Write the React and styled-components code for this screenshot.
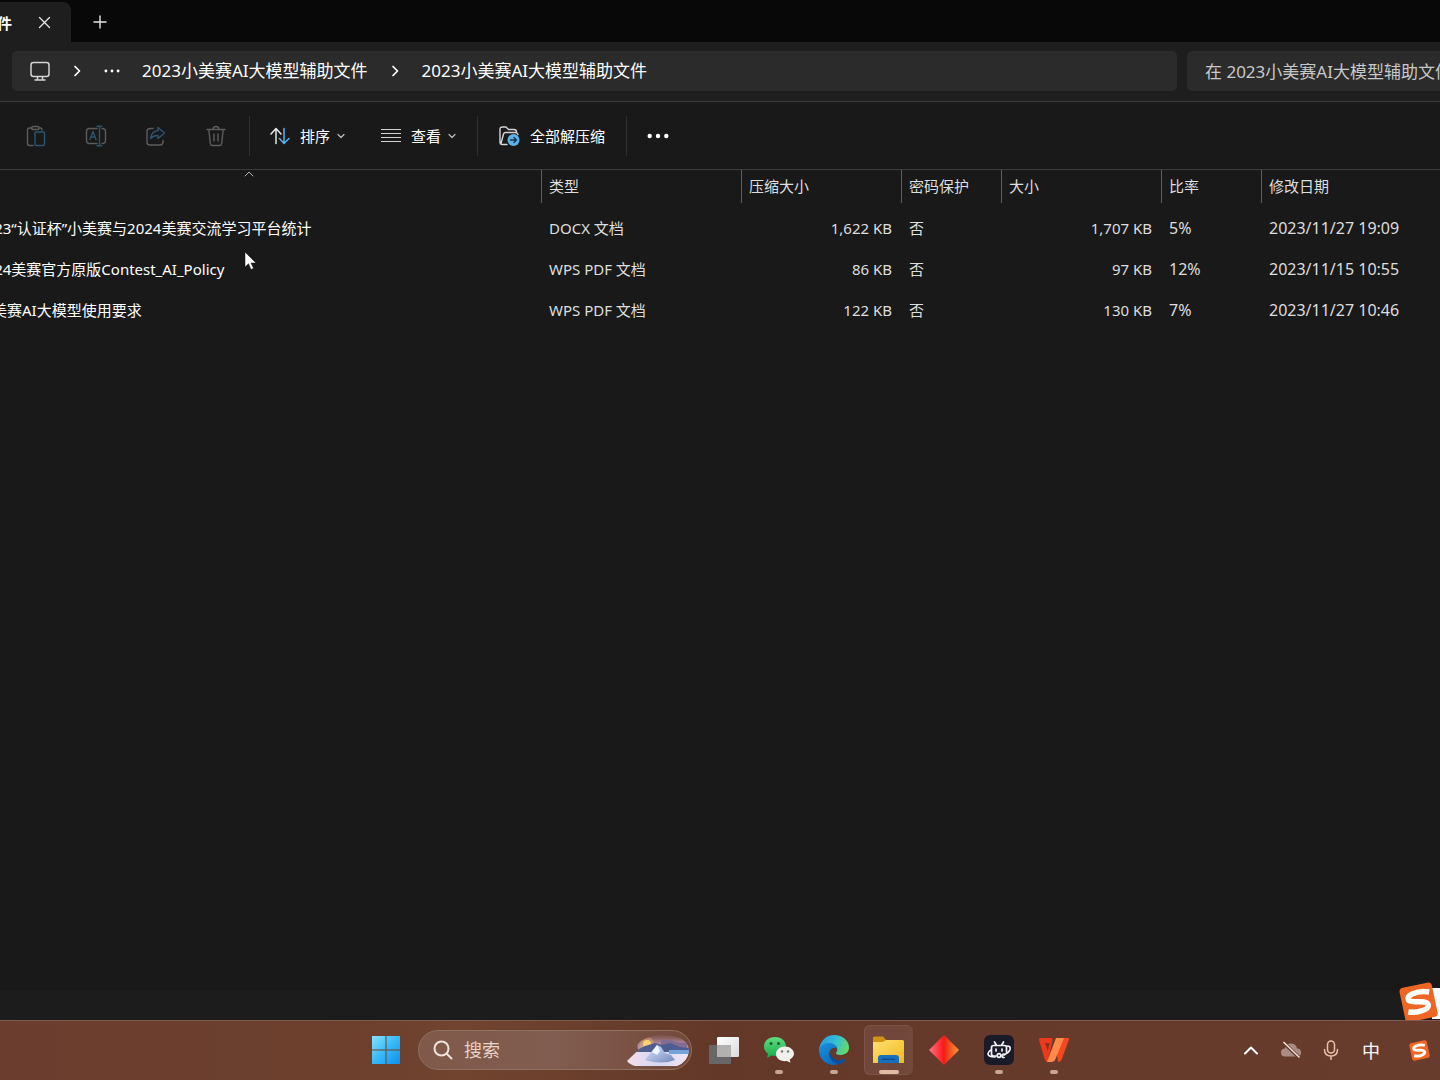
import React from 'react'
import styled, { createGlobalStyle } from 'styled-components'

const colors = {
  black: '#080808',
  chrome: '#1e1e1e',
  field: '#2b2b2b',
  panel: '#191919',
  status: '#1c1c1c',
  line: '#3b3b3b',
  text: '#ffffff',
  soft: '#dedede',
  dim: '#5c5c5c',
  dimBlue: '#2c566e',
  blue: '#5cb3ec',
}

const GlobalStyle = createGlobalStyle`
  * {
    box-sizing: border-box;
  }

  body {
    margin: 0;
    background: ${colors.panel};
    color: ${colors.text};
    font-family: "Noto Sans", "Noto Sans CJK SC", sans-serif;
    font-size: 15px;
  }

  button, input {
    font: inherit;
    color: inherit;
    background: none;
    border: 0;
    padding: 0;
  }

  svg {
    display: block;
    flex: none;
  }
`

const Desktop = styled.div`
  position: relative;
  min-height: 100vh;
  display: flex;
  flex-direction: column;
  overflow: hidden;
`

/* the window is dragged wider than the screen on both sides */
const Explorer = styled.main`
  flex: 1;
  display: flex;
  flex-direction: column;
  margin: 0 -60px 0 -43px;
`

const TabBar = styled.div`
  height: 42px;
  display: flex;
  align-items: flex-end;
  background: ${colors.black};
`

const Tab = styled.div`
  width: 114px;
  height: 40px;
  padding-right: 20px;
  display: flex;
  align-items: center;
  justify-content: flex-end;
  gap: 26px;
  overflow: hidden;
  white-space: nowrap;
  font-weight: 700;
  background: ${colors.chrome};
  border-radius: 8px 8px 0 0;
`

const NewTab = styled.button`
  height: 40px;
  width: 58px;
  display: flex;
  align-items: center;
  justify-content: center;
`

const AddressBar = styled.div`
  display: flex;
  gap: 10px;
  padding: 9px 0 10px 55px;
  background: ${colors.chrome};
  border-bottom: 1px solid ${colors.line};
`

const Crumbs = styled.nav`
  flex: 1;
  height: 40px;
  padding: 0 18px;
  display: flex;
  align-items: center;
  gap: 22px;
  white-space: nowrap;
  font-size: 17px;
  line-height: 20px;
  background: ${colors.field};
  border-radius: 5px;

  a {
    color: ${colors.text};
    text-decoration: none;
  }
`

const SearchInput = styled.input`
  width: 313px;
  height: 40px;
  padding-left: 18px;
  font-size: 17px;
  background: ${colors.field};
  border-radius: 5px;

  &::placeholder {
    color: #c8c8c8;
    opacity: 1;
  }
`

const Toolbar = styled.div`
  height: 68px;
  padding-left: 49px;
  display: flex;
  align-items: center;
  background: ${colors.panel};
  border-bottom: 1px solid ${colors.line};
`

const IconButton = styled.button`
  width: 60px;
  height: 40px;
  display: flex;
  align-items: center;
  justify-content: center;
`

const ToolButton = styled.button`
  height: 40px;
  padding: 0 18px;
  display: flex;
  align-items: center;
  gap: 10px;
`

const Label = styled.span`
  display: flex;
  align-items: center;
  gap: 7px;
`

const Divider = styled.div`
  width: 1px;
  height: 40px;
  margin: 0 2px 0 3px;
  background: #303030;
`

const Files = styled.div`
  flex: 1;
`

const Table = styled.table`
  width: 100%;
  table-layout: fixed;
  border-collapse: collapse;
  white-space: nowrap;
  color: ${colors.soft};
`

const HeadCell = styled.th`
  width: ${props => props.$width};
  height: 37px;
  padding: 0;
  vertical-align: top;
  text-align: left;
  font-weight: 400;

  div {
    height: 33px;
    padding-left: 7px;
    line-height: 33px;
    border-left: 1px solid #5e5e5e;
  }
`

const SortMark = styled.th`
  width: 584px;
  padding: 1px 0 0;
  vertical-align: top;

  svg {
    margin: 0 auto;
  }
`

const Cell = styled.td`
  height: 41px;
  padding: 0 9px 0 8px;
  text-align: ${props => (props.$right ? 'right' : 'left')};
  font-size: ${props => (props.$figures ? '16px' : '15px')};
`

const NameCell = styled(Cell)`
  padding-left: 20px;
  color: ${colors.text};
`

const StatusBar = styled.div`
  height: 29px;
  background: ${colors.status};
`

const Taskbar = styled.footer`
  height: 60px;
  padding: 0 1px 1px 0;
  display: grid;
  grid-template-columns: 1fr auto 1fr;
  align-items: center;
  border-top: 1px solid #805c4e;
  background: linear-gradient(90deg, #6a3d2e 0%, #6c402d 25%, #70442f 32%, #633828 50%, #673b2b 75%, #683c2c 100%);
`

const Apps = styled.div`
  grid-column: 2;
  display: flex;
  align-items: center;
`

const AppButton = styled.button`
  position: relative;
  width: 55px;
  height: 58px;
  display: flex;
  align-items: center;
  justify-content: center;
`

const ActiveFrame = styled.span`
  position: absolute;
  inset: 4px 3px;
  border: 1px solid #7d5546;
  border-right-width: 5px;
  border-right-color: #714a3b;
  border-radius: 6px;
  background: #70473a;
`

const Running = styled.span`
  position: absolute;
  bottom: 5px;
  width: ${props => (props.$active ? '20px' : '8px')};
  height: 4px;
  border-radius: 2px;
  background: ${props => (props.$active ? '#e2bba5' : '#c7a597')};
`

const SearchBox = styled.label`
  width: 274px;
  height: 40px;
  margin: 0 4px 0 5px;
  padding: 0 2px 0 14px;
  display: flex;
  align-items: center;
  gap: 11px;
  overflow: hidden;
  border: 1px solid #90705f;
  border-radius: 20px;
  background: linear-gradient(90deg, #80594a, #805d50 50%, #74493a);

  input {
    flex: 1;
    min-width: 0;
    font-size: 18px;
  }

  input::placeholder {
    color: #e6d2c8;
    opacity: 1;
  }
`

const Tray = styled.div`
  display: flex;
  justify-content: flex-end;
`

const TrayButton = styled.button`
  width: 40px;
  height: 40px;
  display: flex;
  align-items: center;
  justify-content: center;
  font-size: 18px;

  &:last-child {
    margin-left: 8px;
  }
`

const Pointer = styled.div`
  position: absolute;
  left: 244px;
  top: 251px;
`

const InputBadge = styled.div`
  position: absolute;
  right: 0;
  bottom: 60px;
  width: 42px;
  height: 38px;
  overflow: hidden;
`

const Line = ({ size = 20, width = size, height = size, box = '0 0 20 20', stroke = '#e6e6e6', weight = 1.4, children }) => (
  <svg width={width} height={height} viewBox={box} fill="none" stroke={stroke} strokeWidth={weight} strokeLinecap="round" strokeLinejoin="round">
    {children}
  </svg>
)

const CrumbArrow = () => (
  <Line width={10} height={14} box="0 0 10 14" stroke="#fff" weight={1.7}>
    <path d="M3 2.5 7.5 7 3 11.5" />
  </Line>
)

const DownArrow = () => (
  <Line width={8} height={6} box="0 0 8 6" stroke="#bdbdbd" weight={1.2}>
    <path d="M1 1.5 4 4.5 7 1.5" />
  </Line>
)

const Dots = ({ width, radius }) => (
  <svg width={width} height="6" viewBox={`0 0 ${width} 6`} fill="#fff">
    <circle cx={radius + 0.5} cy="3" r={radius} />
    <circle cx={width / 2} cy="3" r={radius} />
    <circle cx={width - radius - 0.5} cy="3" r={radius} />
  </svg>
)

const PasteIcon = () => (
  <Line size={22} box="0 0 22 22" stroke={colors.dim}>
    <path d="M7 3H4.5Q2.5 3 2.5 5v13.5q0 2 2 2H8M14 3h1.500q1.500 0 1.500 2" />
    <rect x="6.500" y="1.500" width="7.500" height="3" rx="1.500" />
    <rect x="10" y="7" width="9.500" height="13.500" rx="1.500" stroke={colors.dimBlue} />
  </Line>
)

const RenameIcon = () => (
  <Line size={22} box="0 0 22 22" stroke={colors.dim}>
    <path d="M12 3.500H4.500q-3 0-3 3v9q0 3 3 3H12M17 3.500q3.500 0 3.500 3v9q0 3-3.500 3" />
    <path d="m5 14.500 3-8 3 8M6 12h4M14.500 1.500v19M12 1.200h5M12 20.800h5" stroke={colors.dimBlue} />
  </Line>
)

const ShareIcon = () => (
  <Line size={22} box="0 0 22 22" stroke={colors.dim}>
    <path d="M8 3.500H5q-3 0-3 3v10.500q0 3 3 3h10q3 0 3-3v-1.500" />
    <path d="M13 2.500 19.500 8 13 13.500v-3q-4.500-.3-7.500 3 .8-7 7.500-8z" stroke={colors.dimBlue} />
  </Line>
)

const TrashIcon = () => (
  <Line size={22} box="0 0 22 22" stroke={colors.dim}>
    <path d="M2 4.500h18M8 4.300q0-2.800 3-2.800t3 2.800M3.800 4.500 5.300 18.500q.2 2 2 2h7.400q1.800 0 2-2L18.200 4.500M9 9v7M13 9v7" />
  </Line>
)

const SortIcon = () => (
  <Line weight={1.5}>
    <path d="M6 17.500V3M1 8l5-5.500L11 8" />
    <path d="M14 2.500V17M9.500 12.500 14 17.500l5-5" stroke={colors.blue} />
  </Line>
)

const ViewIcon = () => (
  <svg width="20" height="20" viewBox="0 0 20 20" fill="#d2d2d2">
    <path d="M0 3h20v1H0zM0 7h20v1H0zM0 11h20v1H0zM0 15h20v1H0z" />
  </svg>
)

const ExtractIcon = () => (
  <Line size={22} box="0 0 22 22" stroke="#d8d4d6">
    <path d="M9 19.500H4.500q-2.500 0-2.500-2.500V4.500q0-2.500 2.500-2.500H8l2.500 2.500H16q2.500 0 2.500 2.500v.5M3 18.500 5.500 9q.5-1.500 2-1.500H17q2.500 0 3 2" />
    <circle cx="15.500" cy="15" r="6" fill={colors.blue} stroke="none" />
    <path d="M12.500 15h6M16 12.500l2.500 2.500-2.500 2.500" stroke="#16334a" />
  </Line>
)

const SogouMark = ({ size }) => (
  <svg width={size} height={size} viewBox="0 0 40 40">
    <g transform="rotate(-12 20 20)">
      <rect x="3" y="3" width="34" height="34" rx="4" fill="#ee6524" />
      <path d="M32 12.500Q24 8.500 15 10.500q-6 1.500-5 5 .8 2.500 10 4 9 1.500 9 5.500 0 4-9 5-6.500.5-12-2.500" fill="none" stroke="#fff" strokeWidth="5.500" />
    </g>
  </svg>
)

const SearchArt = () => (
  <svg width="62" height="34" viewBox="0 0 62 34">
    <defs>
      <linearGradient id="sky" x1="0" x2="0" y1="0" y2="1">
        <stop offset="0" stopColor="#8a6268" stopOpacity="0" />
        <stop offset=".45" stopColor="#a58092" />
        <stop offset="1" stopColor="#c2a6ba" />
      </linearGradient>
      <linearGradient id="snow" x1="0" x2="1">
        <stop offset="0" stopColor="#f4dfea" />
        <stop offset=".5" stopColor="#d3d6f4" />
        <stop offset="1" stopColor="#f5e6f2" />
      </linearGradient>
      <linearGradient id="berg" x1="0" x2="1" y2="1">
        <stop offset="0" stopColor="#dcecff" />
        <stop offset="1" stopColor="#7486bd" />
      </linearGradient>
      <clipPath id="artShape">
        <path d="M0 28Q8 20 12 17 8 12 14 8 26 0 46 3q15 3 16 14-1 12-12 16H8Q2 31 0 28z" />
      </clipPath>
    </defs>
    <g clipPath="url(#artShape)">
      <path d="M0 0h62v20H0z" fill="url(#sky)" />
      <circle cx="20" cy="11" r="7" fill="#e6aa69" opacity=".5" />
      <circle cx="20" cy="11" r="4" fill="#ffd36c" />
      <path d="M34 8q6-3 12 0t14 1v6H34z" fill="#826c91" />
      <path d="M8 18 18 13l10-3 7 2 8-2 10 4 9 1v8H6z" fill="#4d5d8f" />
      <path d="M0 19h62v15H0z" fill="url(#snow)" />
      <path d="M42 17h20v4H42z" fill="#73a5dc" />
      <path d="M18 27 25 18l5-6 4 2 4 6 6 2 4 5q-13 5-30 0z" fill="url(#berg)" />
      <path d="m25 19 5-7 3 6-3 4z" fill="#edf6ff" />
    </g>
  </svg>
)

const StartIcon = () => (
  <svg width="30" height="30" viewBox="0 0 30 30" fill="url(#win)">
    <defs>
      <linearGradient id="win" x1="0" y1="0" x2="30" y2="30" gradientUnits="userSpaceOnUse">
        <stop offset="0" stopColor="#8be5ff" />
        <stop offset=".5" stopColor="#38b9f7" />
        <stop offset="1" stopColor="#078bee" />
      </linearGradient>
    </defs>
    <path d="M1 1h13.500v13.500H1zM15.500 1H29v13.500H15.500zM1 15.500h13.500V29H1zM15.500 15.500H29V29H15.500z" />
  </svg>
)

const TaskViewIcon = () => (
  <svg width="30" height="28" viewBox="0 0 30 28">
    <defs>
      <linearGradient id="pane" x1="0" x2="1" y2="1">
        <stop offset="0" stopColor="#fff" />
        <stop offset="1" stopColor="#dadada" />
      </linearGradient>
    </defs>
    <rect x="8" y="1" width="22" height="20" rx="1" fill="url(#pane)" />
    <rect x="0" y="9" width="22" height="19" rx="1" fill="#676767" />
    <path d="M8 9h14v12H8z" fill="#b3b1b0" />
  </svg>
)

const WeChatIcon = () => (
  <svg width="32" height="28" viewBox="0 0 32 28">
    <defs>
      <linearGradient id="chat" x1="0" x2="0" y1="0" y2="1">
        <stop offset="0" stopColor="#5fdc7d" />
        <stop offset="1" stopColor="#18ad4c" />
      </linearGradient>
    </defs>
    <path d="M12 1C5.500 1 1 5 1 10.500c0 3 1.500 5.500 4 7.200L4 22l4.500-2.400c8 1.600 14.500-3 14.500-9.100C23 5 18.500 1 12 1z" fill="url(#chat)" />
    <circle cx="8" cy="7.500" r="1.500" fill="#175b2d" />
    <circle cx="15.500" cy="7.500" r="1.500" fill="#175b2d" />
    <path d="M22 10.500c-5 0-9 3.200-9 7.500s4.500 8 11 7l3.500 1.800-.8-3.300c2.300-1.300 4.300-3.300 4.300-5.500 0-4.300-4-7.500-9-7.500z" fill="#f2f0ef" />
    <circle cx="19" cy="15.500" r="1.200" fill="#777" />
    <circle cx="25" cy="15.500" r="1.200" fill="#777" />
  </svg>
)

const EdgeIcon = () => (
  <svg width="30" height="30" viewBox="0 0 30 30">
    <defs>
      <linearGradient id="edgeTop" x1="0" x2="1" y1=".2" y2=".5">
        <stop offset="0" stopColor="#2597df" />
        <stop offset=".55" stopColor="#35bfd6" />
        <stop offset="1" stopColor="#65d968" />
      </linearGradient>
      <linearGradient id="edgeBase" x1="0" x2="1" y1="0" y2="1">
        <stop offset="0" stopColor="#1893e3" />
        <stop offset="1" stopColor="#0b58aa" />
      </linearGradient>
    </defs>
    <path d="M0 15C1 6 7 0 15 0c9 0 15 6 15 12.500C30 18 25.500 20 21 20c-3 0-4-1-4-2 0-.8 1.300-1.500 1.300-3.500 0-2.500-3-5.500-8-5.500C5 9 1 12 0 15z" fill="url(#edgeTop)" />
    <path d="M0 15c1-4 5-7 10-7 4.500 0 8.300 3 8.300 6-2-2-6-1.500-7.500 2-2 5 3 9.500 9 9.500 3 0 5.500-1 7.500-2.200C25 28 20 30 15 30 6.500 30 0 23.500 0 15z" fill="url(#edgeBase)" />
    <path d="M10.800 16C8.500 22 13 28.500 20 29c3-1 6-3 7.500-5.700-8 4.500-17 .2-16.700-7.300z" fill="#0d4e9c" />
  </svg>
)

const FolderIcon = () => (
  <svg width="31" height="28" viewBox="0 0 31 28">
    <defs>
      <linearGradient id="folder" x1="0" x2="1" y1="0" y2="1">
        <stop offset="0" stopColor="#ffe072" />
        <stop offset="1" stopColor="#f2b920" />
      </linearGradient>
    </defs>
    <path d="M0 2q0-1.500 1.500-1.500H10L13 4v5H0z" fill="#d3920f" />
    <path d="M0 6h10l3-2h16.500Q31 4 31 5.500V27H0z" fill="url(#folder)" />
    <path d="M5 27v-5q0-3 3-3h15q3 0 3 3v5z" fill="#1870bd" />
    <path d="M9 22.500h13V24H9z" fill="#0d4e8c" />
  </svg>
)

const DiamondIcon = () => (
  <svg width="30" height="30" viewBox="0 0 30 30">
    <defs>
      <linearGradient id="gem" x1="0" x2="1">
        <stop offset="0" stopColor="#ff7580" />
        <stop offset=".5" stopColor="#ff141b" />
        <stop offset=".52" stopColor="#ed2416" />
        <stop offset="1" stopColor="#ff9a32" />
      </linearGradient>
    </defs>
    <path d="M15 0 30 15 15 30 0 15z" fill="url(#gem)" />
  </svg>
)

const RecorderIcon = () => (
  <svg width="30" height="30" viewBox="0 0 30 30">
    <rect width="30" height="30" rx="6" fill="#191b29" />
    <g fill="none" stroke="#f3f3f6" strokeWidth="1.700" strokeLinecap="round">
      <path d="m10.500 7 1.800 3M19.500 7l-1.800 3M12 21H9.500q-2 0-2-2v-6.500q0-2 2-2h11q2 0 2 2V17M12 14v2M18 14v2" />
      <path d="M7 15q-3 2-3 3.500 0 3.500 7 3.500M23 11q4 0 3 3.500-1 3-6 5.500" />
      <circle cx="15" cy="20.500" r="1.800" />
      <path d="M20 19q-2 0-2 1.700T20 22.500" />
    </g>
  </svg>
)

const WpsIcon = () => (
  <svg width="30" height="25" viewBox="0 0 30 25">
    <path d="M1 0h11q2 0 1.500 2L9 24q-2 0-3-2L0 2Q0 0 1 0z" fill="#ee3a1c" />
    <path d="M6 5h4.500L8.800 13z" fill="#8f2c1c" />
    <path d="M20.500 0H29q1.500 0 .8 2L22.500 22q-1 2-3.500 2l-1.500-10z" fill="#f4481f" />
    <path d="M17 0h8l-8.500 21q-1.200 3-3.500 3H8z" fill="#ff8a4c" />
  </svg>
)

const tools = [
  ['粘贴', PasteIcon],
  ['重命名', RenameIcon],
  ['共享', ShareIcon],
  ['删除', TrashIcon],
]

const columns = [
  ['类型', '200px'],
  ['压缩大小', '160px'],
  ['密码保护', '100px'],
  ['大小', '160px'],
  ['比率', '100px'],
  ['修改日期', 'auto'],
]

const files = [
  ['2023“认证杯”小美赛与2024美赛交流学习平台统计', 'DOCX 文档', '1,622 KB', '否', '1,707 KB', '5%', '2023/11/27 19:09'],
  ['2024美赛官方原版Contest_AI_Policy', 'WPS PDF 文档', '86 KB', '否', '97 KB', '12%', '2023/11/15 10:55'],
  ['小美赛AI大模型使用要求', 'WPS PDF 文档', '122 KB', '否', '130 KB', '7%', '2023/11/27 10:46'],
]

const apps = [
  { name: '任务视图', Icon: TaskViewIcon },
  { name: '微信', Icon: WeChatIcon, running: true },
  { name: 'Edge', Icon: EdgeIcon, running: true },
  { name: '文件资源管理器', Icon: FolderIcon, running: true, active: true },
  { name: '应用', Icon: DiamondIcon },
  { name: '录屏', Icon: RecorderIcon, running: true },
  { name: 'WPS', Icon: WpsIcon, running: true },
]

const AppGlyph = styled.span`
  position: relative;
`

export default () => (
  <Desktop>
    <GlobalStyle />
    <Explorer>
      <TabBar>
        <Tab>
          <span>辅助文件</span>
          <button aria-label="关闭标签页">
            <Line size={13} box="0 0 13 13" weight={1.3}><path d="m1.500 1.500 10 10M11.500 1.500l-10 10" /></Line>
          </button>
        </Tab>
        <NewTab aria-label="新标签页">
          <Line size={14} box="0 0 14 14" weight={1.4}><path d="M7 1v12M1 7h12" /></Line>
        </NewTab>
      </TabBar>

      <AddressBar>
        <Crumbs>
          <Line stroke="#d4d4d4" weight={1.5}>
            <rect x="1" y="1.500" width="18" height="14" rx="2.500" />
            <path d="M7.500 16v3M12.500 16v3M5 19h10" />
          </Line>
          <CrumbArrow />
          <Dots width={16} radius={1.4} />
          <a href="#parent">2023小美赛AI大模型辅助文件</a>
          <CrumbArrow />
          <a href="#current">2023小美赛AI大模型辅助文件</a>
        </Crumbs>
        <SearchInput aria-label="搜索文件夹" placeholder="在 2023小美赛AI大模型辅助文件 中搜索" />
      </AddressBar>

      <Toolbar>
        {tools.map(([name, Icon]) => (
          <IconButton key={name} aria-label={name} disabled><Icon /></IconButton>
        ))}
        <Divider />
        <ToolButton><SortIcon /><Label>排序<DownArrow /></Label></ToolButton>
        <ToolButton><ViewIcon /><Label>查看<DownArrow /></Label></ToolButton>
        <Divider />
        <ToolButton><ExtractIcon />全部解压缩</ToolButton>
        <Divider />
        <ToolButton aria-label="查看更多"><Dots width={22} radius={2.2} /></ToolButton>
      </Toolbar>

      <Files>
        <Table>
          <thead>
            <tr>
              <SortMark aria-label="名称">
                <Line width={10} height={6} box="0 0 10 6" stroke="#b0b0b0" weight={1}><path d="m1 5 4-4 4 4" /></Line>
              </SortMark>
              {columns.map(([name, width]) => (
                <HeadCell key={name} $width={width}><div>{name}</div></HeadCell>
              ))}
            </tr>
          </thead>
          <tbody>
            {files.map(([name, type, packed, locked, size, ratio, date]) => (
              <tr key={name}>
                <NameCell>{name}</NameCell>
                <Cell>{type}</Cell>
                <Cell $right>{packed}</Cell>
                <Cell>{locked}</Cell>
                <Cell $right>{size}</Cell>
                <Cell $figures>{ratio}</Cell>
                <Cell $figures>{date}</Cell>
              </tr>
            ))}
          </tbody>
        </Table>
      </Files>
      <StatusBar />
    </Explorer>

    <Taskbar>
      <Apps>
        <AppButton aria-label="开始"><StartIcon /></AppButton>
        <SearchBox>
          <Line weight={2} stroke="#f0e3dc">
            <circle cx="8.500" cy="8.500" r="7" />
            <path d="m13.500 13.500 5 5" />
          </Line>
          <input aria-label="搜索" placeholder="搜索" />
          <SearchArt />
        </SearchBox>
        {apps.map(({ name, Icon, running, active }) => (
          <AppButton key={name} aria-label={name}>
            {active && <ActiveFrame />}
            <AppGlyph><Icon /></AppGlyph>
            {running && <Running $active={active} />}
          </AppButton>
        ))}
      </Apps>
      <Tray>
        <TrayButton aria-label="显示隐藏的图标">
          <Line width={14} height={9} box="0 0 14 9" stroke="#fff" weight={2}><path d="m1 7.500 6-6 6 6" /></Line>
        </TrayButton>
        <TrayButton aria-label="OneDrive">
          <svg width="22" height="18" viewBox="0 0 22 18">
            <path d="M5 15.500q-4 0-4-4t4-4q1-5 6-5t6 5q4 0 4 4t-4 4z" fill="#a98d82" />
            <path d="m3 1 16 15.500" stroke="#673b2b" strokeWidth="3.500" />
            <path d="m3.500 1 16 15.500" stroke="#f3e8e2" strokeWidth="1.400" />
          </svg>
        </TrayButton>
        <TrayButton aria-label="麦克风">
          <Line stroke="#eac0aa" weight={1.5}>
            <rect x="6.500" y="1" width="7" height="12" rx="3.500" />
            <path d="M3.500 9.500q0 6.500 6.500 6.500t6.500-6.500M10 16v3.500" />
          </Line>
        </TrayButton>
        <TrayButton>中</TrayButton>
        <TrayButton aria-label="搜狗输入法"><SogouMark size={21} /></TrayButton>
      </Tray>
    </Taskbar>

    <Pointer>
      <svg width="14" height="20" viewBox="0 0 14 20">
        <path d="M1 1v15l3.500-3.300L7 18.500l2.500-1.200L7 12h5z" fill="#fff" stroke="#111" strokeWidth=".5" />
      </svg>
    </Pointer>
    <InputBadge>
      <svg width="42" height="38" viewBox="0 0 42 38">
        <path d="M34 6h8v31H34z" fill="#fff" />
        <g transform="rotate(-12 20 20)">
          <rect x="4" y="3" width="33" height="35" rx="4" fill="#ee6524" />
          <path d="M33 12.500Q24 9 16 11q-6 1.500-5 5 .8 2.500 10 4 8.500 1.500 8.500 5 0 4-9 4.500-6.500.5-12-2" fill="none" stroke="#fff" strokeWidth="5.500" />
        </g>
      </svg>
    </InputBadge>
  </Desktop>
)
